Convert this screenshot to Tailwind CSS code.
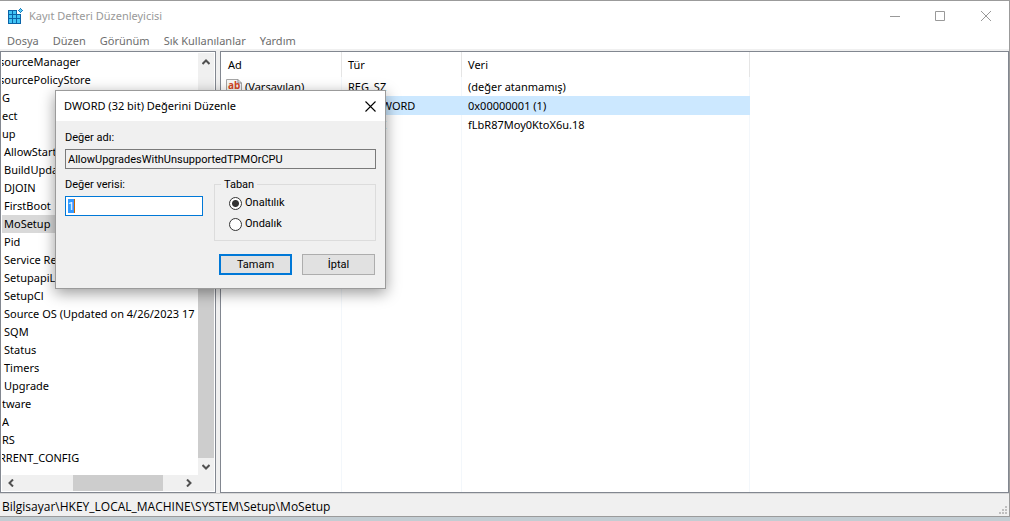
<!DOCTYPE html>
<html lang="tr">
<head>
<meta charset="utf-8">
<title>Kayıt Defteri Düzenleyicisi</title>
<script src="https://cdn.jsdelivr.net/npm/@tailwindcss/browser@4"></script>
</head>
<body class="flex h-screen flex-col overflow-hidden bg-[#c3cdd3] pb-1 font-['Noto_Sans',sans-serif] text-[11px] leading-[18px] text-black">
<div class="relative flex min-h-0 flex-1 flex-col border-y border-r border-[#9b9b9b] bg-[#f0f0f0]">

  <header class="flex h-[30px] shrink-0 items-center bg-white pl-[7px] text-[#999999]">
    <svg class="mr-[6px] h-4 w-4" viewBox="0 0 16 16" shape-rendering="crispEdges" aria-hidden="true">
      <path d="M1 2h9v4h4v10H1z" fill="#0a64a8"/>
      <path d="M2 3h3v3H2zM6 3h3v3H6zM2 7h3v3H2zM6 7h3v3H6zM10 7h3v3h-3zM2 11h3v4H2zM6 11h3v4H6zM10 11h3v4h-3z" fill="#41c4f5"/>
      <path d="M13 0h1v1h1v1h1v1h-1v1h-1v1h-1V4h-1V3h-1V2h1V1h1z" fill="#1b7fbd"/>
      <path d="M13 1h1v1h1v1h-1v1h-1V3h-1V2h1z" fill="#63cdf5"/>
    </svg>
    <h1>Kayıt Defteri Düzenleyicisi</h1>
    <div class="ml-auto flex h-full">
      <button class="grid w-[44px] place-items-center" aria-label="Simge durumuna küçült"><svg class="h-[10px] w-[10px]" viewBox="0 0 10 10"><path d="M0 5.5h10" stroke="#999"/></svg></button>
      <button class="grid w-[46px] place-items-center" aria-label="Ekranı kapla"><svg class="h-[10px] w-[10px]" viewBox="0 0 10 10"><path d="M.5.5h9v9h-9z" fill="none" stroke="#999"/></svg></button>
      <button class="grid w-[46px] place-items-center" aria-label="Kapat"><svg class="h-[10px] w-[10px]" viewBox="0 0 10 10"><path d="M0 0l10 10M10 0L0 10" stroke="#999"/></svg></button>
    </div>
  </header>

  <nav class="flex h-5 shrink-0 items-center gap-[14px] border-b-2 border-[#f0f0f0] bg-white pt-[2px] pl-[7px] text-[#6d6d6d]">
    <button>Dosya</button>
    <button>Düzen</button>
    <button>Görünüm</button>
    <button>Sık Kullanılanlar</button>
    <button>Yardım</button>
  </nav>

  <main class="flex min-h-0 flex-1 gap-1">
    <section class="grid w-[216px] shrink-0 grid-cols-[1fr_16px] grid-rows-[1fr_16px] border border-[#828790] bg-white p-px" aria-label="Anahtarlar">
      <ul class="min-h-0 overflow-hidden whitespace-nowrap">
        <li class="-ml-[3px]">sourceManager</li>
        <li class="-ml-[3px]">sourcePolicyStore</li>
        <li>G</li>
        <li>ect</li>
        <li>up</li>
        <li class="pl-[2px]">AllowStart</li>
        <li class="pl-[2px]">BuildUpdate</li>
        <li class="pl-[2px]">DJOIN</li>
        <li class="pl-[2px]">FirstBoot</li>
        <li class="bg-[#d9d9d9] pl-[2px]">MoSetup</li>
        <li class="pl-[2px]">Pid</li>
        <li class="pl-[2px]">Service Reporting</li>
        <li class="pl-[2px]">SetupapiLogStatus</li>
        <li class="pl-[2px]">SetupCl</li>
        <li class="pl-[2px]">Source OS (Updated on 4/26/2023 17</li>
        <li class="pl-[2px]">SQM</li>
        <li class="pl-[2px]">Status</li>
        <li class="pl-[2px]">Timers</li>
        <li class="pl-[2px]">Upgrade</li>
        <li>tware</li>
        <li>A</li>
        <li>RS</li>
        <li class="-ml-[3px]">RRENT_CONFIG</li>
      </ul>
      <div class="flex min-h-0 flex-col bg-[#f0f0f0]">
        <button class="grid h-[17px] shrink-0 place-items-center" aria-label="Yukarı"><svg class="h-2 w-2" viewBox="0 0 8 8"><path d="M.5 6L4 2.500l3.500 3.500" fill="none" stroke="#505050" stroke-width="2"/></svg></button>
        <div class="flex min-h-0 flex-1 flex-col justify-end"><div class="h-3/5 bg-[#cdcdcd]"></div></div>
        <button class="grid h-[17px] shrink-0 place-items-center" aria-label="Aşağı"><svg class="h-2 w-2" viewBox="0 0 8 8"><path d="M.5 2L4 5.500 7.500 2" fill="none" stroke="#505050" stroke-width="2"/></svg></button>
      </div>
      <div class="flex bg-[#f0f0f0]">
        <button class="grid w-[17px] shrink-0 place-items-center" aria-label="Sola"><svg class="h-2 w-2" viewBox="0 0 8 8"><path d="M6 .5L2.500 4 6 7.500" fill="none" stroke="#505050" stroke-width="2"/></svg></button>
        <div class="flex flex-1 justify-end pr-[17px]"><div class="w-[90px] bg-[#cdcdcd]"></div></div>
        <button class="mr-px grid w-[17px] shrink-0 place-items-center" aria-label="Sağa"><svg class="h-2 w-2" viewBox="0 0 8 8"><path d="M2 .5L5.500 4 2 7.500" fill="none" stroke="#505050" stroke-width="2"/></svg></button>
      </div>
      <div class="bg-[#f0f0f0]"></div>
    </section>

    <section class="flex min-w-0 flex-1 border border-[#828790] bg-white" aria-label="Değerler">
      <div class="w-[529px] overflow-hidden">
        <table class="w-full table-fixed border-separate border-spacing-0 text-left">
          <colgroup><col class="w-[121px]"><col class="w-[120px]"><col></colgroup>
          <thead>
            <tr class="h-[25px]">
              <th class="border-r border-[#e5e5e5] p-0 pl-[7px] font-normal">Ad</th>
              <th class="border-r border-[#e5e5e5] p-0 pl-[6px] font-normal">Tür</th>
              <th class="border-r border-[#e5e5e5] p-0 pl-[6px] font-normal">Veri</th>
            </tr>
          </thead>
          <tbody class="whitespace-nowrap">
            <tr class="h-[19px]">
              <td class="border-r border-[#f3f7fb] p-0">
                <span class="flex items-center gap-[3px] pl-[5px]">
                  <svg class="h-4 w-4" viewBox="0 0 16 16" aria-hidden="true"><path d="M.5.500h11.500l3.500 3.500v11.500H.5z" fill="#f7f7f7" stroke="#a6a6a6"/><path d="M12 .5V4h3.500" fill="none" stroke="#8a8a8a"/><text x="2" y="10" font-family="Noto Sans" font-size="10" font-weight="700" fill="#d24726">ab</text></svg>
                  (Varsayılan)
                </span>
              </td>
              <td class="border-r border-[#f3f7fb] py-0 pl-[6px]">REG_SZ</td>
              <td class="border-r border-[#f3f7fb] py-0 pl-[6px]">(değer atanmamış)</td>
            </tr>
            <tr class="h-[19px] bg-[#cce8ff]">
              <td class="overflow-hidden py-0 pl-[23px]">AllowUpgrades</td>
              <td class="py-0 pl-[6px]">REG_DWORD</td>
              <td class="py-0 pl-[6px]">0x00000001 (1)</td>
            </tr>
            <tr class="h-[19px]">
              <td class="border-r border-[#f3f7fb] py-0 pl-[23px]">BuildId</td>
              <td class="border-r border-[#f3f7fb] py-0 pl-[6px]">REG_SZ</td>
              <td class="border-r border-[#f3f7fb] py-0 pl-[6px]">fLbR87Moy0KtoX6u.18</td>
            </tr>
            <tr class="h-[400px]">
              <td class="border-r border-[#f3f7fb]"></td><td class="border-r border-[#f3f7fb]"></td><td class="border-r border-[#f3f7fb]"></td>
            </tr>
          </tbody>
        </table>
      </div>
    </section>
  </main>

  <footer class="flex h-[23px] shrink-0 items-center justify-between border-t border-[#d7d7d7] pl-[2px] font-['Open_Sans',sans-serif] text-[12px]">
    <span class="pt-[3px]">Bilgisayar\HKEY_LOCAL_MACHINE\SYSTEM\Setup\MoSetup</span>
    <svg class="mr-[2px] mb-[2px] h-2 w-2 self-end" viewBox="0 0 8 8" shape-rendering="crispEdges" aria-hidden="true"><path d="M6 0h2v2H6zM3 3h2v2H3zM6 3h2v2H6zM0 6h2v2H0zM3 6h2v2H3zM6 6h2v2H6z" fill="#bfbfbf"/></svg>
  </footer>

  <div role="dialog" aria-labelledby="dlg-title" class="absolute top-[89px] left-[55px] w-[331px] border border-[#9b9b9b] bg-[#f0f0f0] font-[Roboto,sans-serif] text-[11px] leading-[14px] shadow-[0_4px_14px_rgba(0,0,0,0.4)]">
    <div class="flex h-[30px] items-center justify-between bg-white pl-2 font-['Noto_Sans',sans-serif]">
      <h2 id="dlg-title">DWORD (32 bit) Değerini Düzenle</h2>
      <button class="grid h-full w-[30px] place-items-center" aria-label="Kapat"><svg class="h-[11px] w-[11px]" viewBox="0 0 11 11"><path d="M.5.5l10 10M10.500.5l-10 10" stroke="#000" stroke-width="1.100"/></svg></button>
    </div>
    <form class="px-[9px] pt-[10px] pb-[13px]">
      <label for="vname" class="block">Değer adı:</label>
      <input id="vname" readonly value="AllowUpgradesWithUnsupportedTPMOrCPU" class="mt-[4px] block h-5 w-full border border-[#7a7a7a] bg-[#f0f0f0] px-[2px] outline-none">
      <div class="mt-[9px] flex justify-between">
        <div class="w-[138px]">
          <label for="vdata" class="block">Değer verisi:</label>
          <div class="relative mt-[4px]">
            <input id="vdata" value="1" class="block h-5 w-full border border-[#0078d7] bg-white bg-[linear-gradient(#3399ff,#3399ff)] bg-[length:6px_14px] bg-[position:2px_2px] bg-no-repeat px-[2px] text-white outline-none">
            <span class="absolute top-[3px] left-[9px] h-[14px] w-px bg-[#cc6600]"></span>
          </div>
        </div>
        <fieldset class="relative mt-[6px] h-[57px] w-[162px] border border-[#dcdcdc] pt-[11px] pl-[14px]">
          <legend class="absolute -top-[7px] left-[6px] bg-[#f0f0f0] px-[3px]">Taban</legend>
          <label class="flex h-[14px] items-center gap-[3px]"><input type="radio" name="base" checked class="h-[13px] w-[13px] appearance-none rounded-full border border-[#333] bg-white bg-[radial-gradient(circle,#333_0_3px,transparent_4px)]">Onaltılık</label>
          <label class="mt-[7px] flex h-[14px] items-center gap-[3px]"><input type="radio" name="base" class="h-[13px] w-[13px] appearance-none rounded-full border border-[#333] bg-white">Ondalık</label>
        </fieldset>
      </div>
      <div class="mt-[13px] flex justify-end gap-[10px] pr-px">
        <button type="button" class="h-[21px] w-[73px] border-2 border-[#0078d7] bg-[#e1e1e1]">Tamam</button>
        <button type="button" class="h-[21px] w-[73px] border border-[#adadad] bg-[#e1e1e1]">İptal</button>
      </div>
    </form>
  </div>
</div>
</body>
</html>
